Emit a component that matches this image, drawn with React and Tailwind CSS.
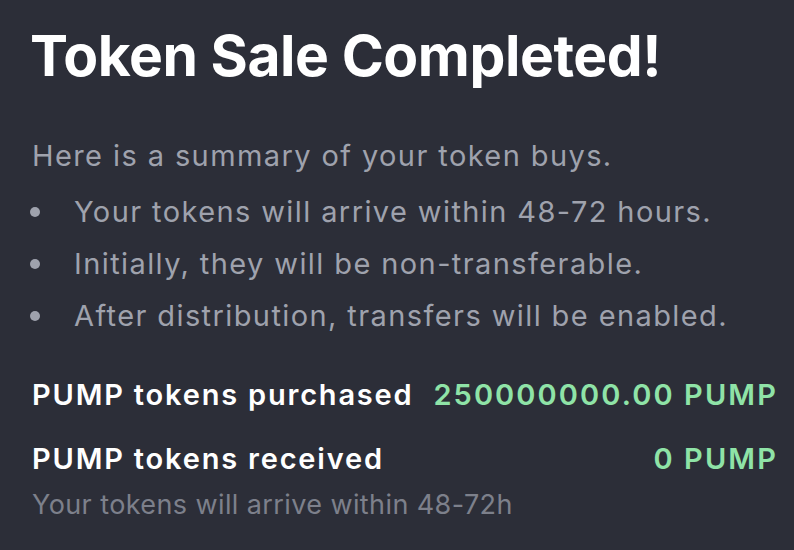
import React from "react";

const bullets = [
  "Your tokens will arrive within 48-72 hours.",
  "Initially, they will be non-transferable.",
  "After distribution, transfers will be enabled.",
];

const App = () => {
  return (
    <div
      className="w-[794px] h-[550px] overflow-hidden bg-[#2c2e38] pl-[32px] pr-[18px] pt-[22px]"
      style={{ fontFamily: "Inter, 'Noto Sans', sans-serif" }}
    >
      <h1 className="text-[57px] leading-[68px] font-bold text-white tracking-[-0.45px] ml-[-2px]">
        Token Sale Completed!
      </h1>

      <div className="mt-[46px] text-[29px] text-[#9fa2ad] tracking-[1.4px]">
        <p className="leading-[40px]">Here is a summary of your token buys.</p>
        <ul className="mt-[10px]">
          {bullets.map((b) => (
            <li key={b} className="flex items-center leading-[52px]">
              <span className="w-[10px] h-[10px] rounded-full bg-[#9fa2ad] ml-[-2px] mr-[34px]" />
              {b}
            </li>
          ))}
        </ul>
      </div>

      <div className="mt-[33px] text-[29px] font-semibold tracking-[1.8px]">
        <div className="flex justify-between items-center leading-[40px]">
          <span className="text-white">PUMP tokens purchased</span>
          <span className="text-[#8fe3a7] tracking-[2.1px] mr-[-2px]">250000000.00 PUMP</span>
        </div>
        <div className="flex justify-between items-center leading-[40px] mt-[24px]">
          <span className="text-white">PUMP tokens received</span>
          <span className="text-[#8fe3a7] tracking-[2.1px] mr-[-2px]">0 PUMP</span>
        </div>
        <p className="text-[27px] font-normal text-[#7d808b] leading-[36px] mt-[8px] tracking-[0.4px]">
          Your tokens will arrive within 48-72h
        </p>
      </div>
    </div>
  );
};

export default App;
